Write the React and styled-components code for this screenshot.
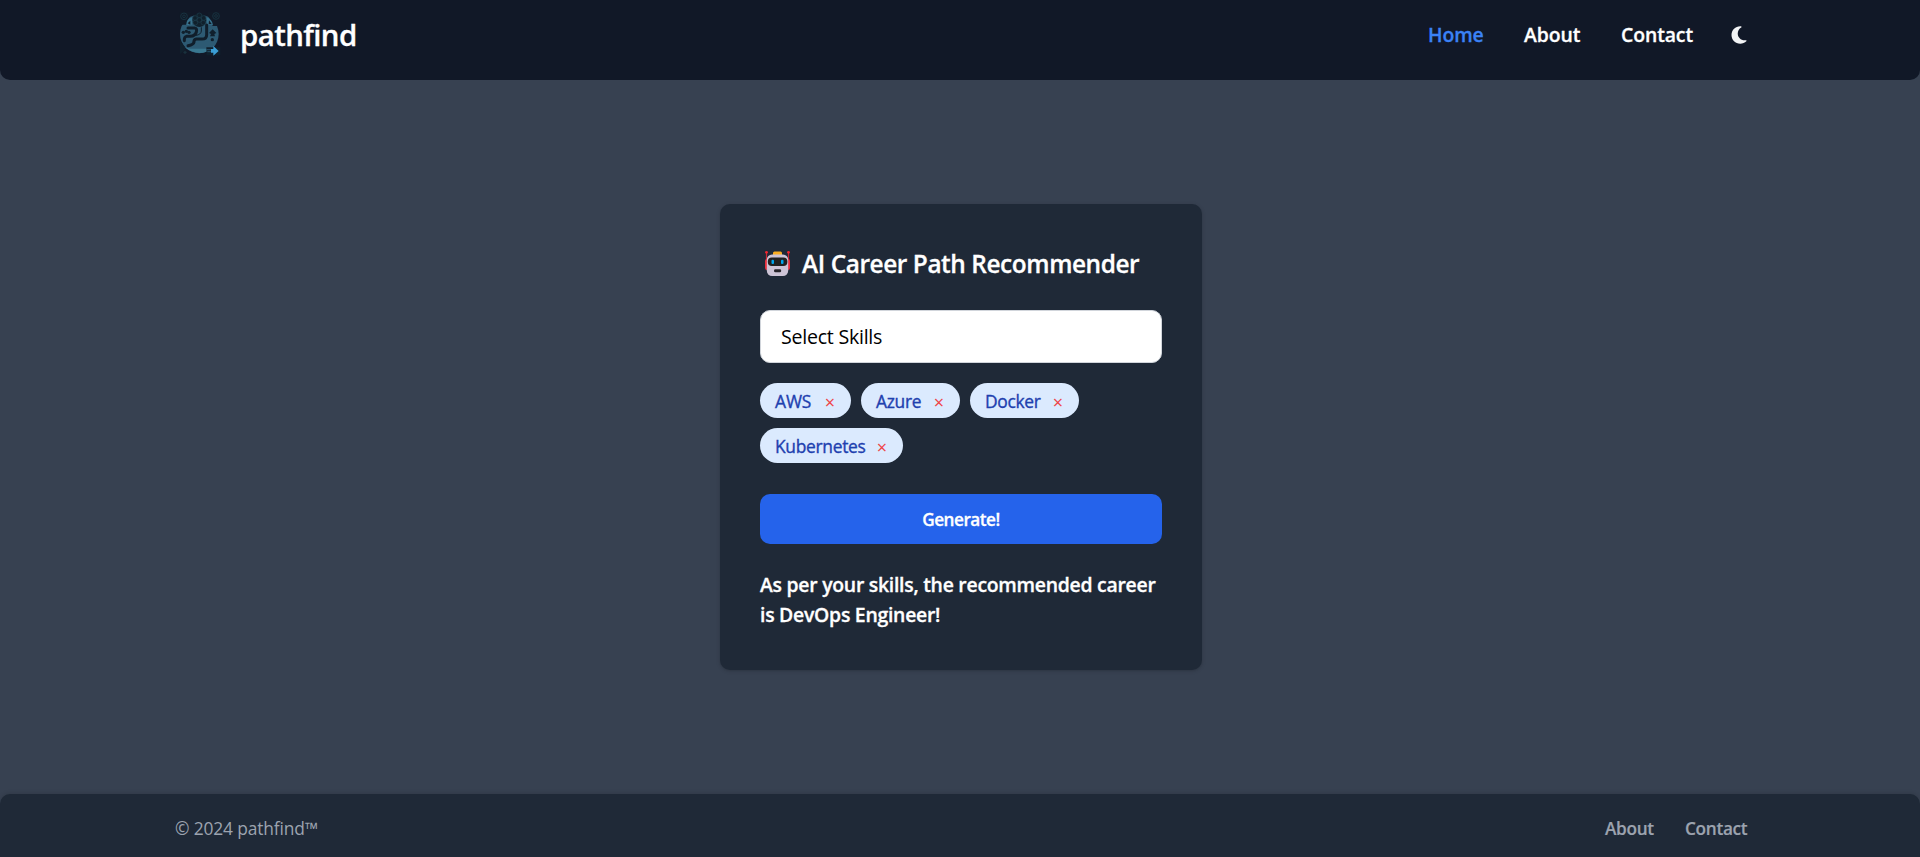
import React from "react";
import styled, { createGlobalStyle } from "styled-components";
import { FaMoon } from "react-icons/fa6";

const GlobalStyle = createGlobalStyle`
  *, *::before, *::after { box-sizing: border-box; }
  html { font-size: 20px; }
  body {
    margin: 0;
    background: #374151;
    font-family: "Open Sans", "Noto Sans", sans-serif;
    color: #fff;
    overflow: hidden;
  }
  a { color: inherit; text-decoration: none; }
  button { font: inherit; border: 0; cursor: pointer; }
`;

const Page = styled.div`
  height: 857px;
  display: flex;
  flex-direction: column;
`;

const Header = styled.header`
  height: 80px;
  flex: none;
  display: flex;
  align-items: flex-start;
  justify-content: space-between;
  padding: 5px 171px 0 175px;
  background: #111827;
  border-radius: 0 0 10px 10px;
`;

const Brand = styled.a`
  display: flex;
  align-items: center;
  height: 60px;
  gap: 15px;
`;

const LogoArt = styled.svg`
  width: 50px;
  height: 50px;
  flex: none;
`;

const BrandName = styled.span`
  font-size: 29.4px;
  font-weight: 600;
  line-height: 40px;
  letter-spacing: -0.6px;
  -webkit-text-stroke: 0.3px;
  white-space: nowrap;
`;

const Nav = styled.nav`
  display: flex;
  align-items: center;
  height: 60px;
`;

const NavLink = styled.a`
  width: ${(p) => p.$width}px;
  font-size: 19.4px;
  font-weight: 600;
  line-height: 30px;
  letter-spacing: -0.1px;
  -webkit-text-stroke: 0.3px;
  white-space: nowrap;
  color: ${(p) => (p.$active ? "#3b82f6" : "#fff")};
`;

const ThemeToggle = styled.button`
  display: flex;
  padding: 0;
  background: none;
  color: #f3f4f6;
`;

const Main = styled.main`
  flex: 1;
  display: flex;
  justify-content: center;
  align-items: flex-start;
  padding: 124px 0 0 2px;
`;

const Card = styled.section`
  width: 482px;
  height: 466px;
  padding: 40px;
  background: #1f2937;
  border-radius: 10px;
  box-shadow: 0 1px 4px rgba(0, 0, 0, 0.15), 0 1px 2px rgba(0, 0, 0, 0.06);
`;

const CardTitle = styled.h1`
  display: flex;
  align-items: center;
  height: 40px;
  margin: 0 0 26px;
  padding: 0 0 1px 4px;
  font-size: 24.4px;
  font-weight: 600;
  letter-spacing: -0.42px;
  -webkit-text-stroke: 0.3px;
  white-space: nowrap;
`;

const RobotArt = styled.svg`
  width: 27px;
  height: 27px;
  margin-right: 11px;
  flex: none;
`;

const SkillSelect = styled.div`
  display: flex;
  align-items: center;
  height: 53px;
  padding: 0 20px;
  border: 1px solid #d1d5db;
  border-radius: 10px;
  background: #fff;
  color: #000;
  font-size: 19.6px;
  letter-spacing: -0.25px;
`;

const ChipList = styled.div`
  display: flex;
  flex-wrap: wrap;
  gap: 10px;
  margin: 20px 0 31px;
`;

const Chip = styled.span`
  display: flex;
  align-items: center;
  justify-content: space-between;
  width: ${(p) => p.$width}px;
  height: 35px;
  padding: 0 16px 0 15px;
  border-radius: 18px;
  background: #dbeafe;
  color: #1e40af;
  font-size: 17.4px;
  font-weight: 500;
  letter-spacing: ${(p) => p.$track || 0}px;
  -webkit-text-stroke: 0.35px;
  white-space: nowrap;
`;

const RemoveButton = styled.button`
  display: flex;
  padding: 2px 0 0;
  background: none;
  color: #ef4444;
  font-size: 18px;
  line-height: 24px;
  letter-spacing: 0;
  -webkit-text-stroke: 0;
`;

const GenerateButton = styled.button`
  display: flex;
  align-items: center;
  justify-content: center;
  width: 100%;
  height: 50px;
  border-radius: 10px;
  background: #2563eb;
  color: #fff;
  && {
    font-size: 17.2px;
    font-weight: 600;
    letter-spacing: -0.5px;
    -webkit-text-stroke: 0.3px;
  }
`;

const Result = styled.p`
  margin: 26px -10px 0 0;
  font-size: 19.4px;
  font-weight: 600;
  line-height: 30px;
  letter-spacing: -0.26px;
  -webkit-text-stroke: 0.3px;
  white-space: nowrap;
`;

const Footer = styled.footer`
  height: 63px;
  flex: none;
  display: flex;
  align-items: center;
  justify-content: space-between;
  padding: 6px 172px 0 175px;
  background: #1f2937;
  border-radius: 10px 10px 0 0;
  box-shadow: 0 -1px 4px rgba(0, 0, 0, 0.12);
  color: #9ca3af;
  font-size: 17.2px;
  line-height: 25px;
`;

const Copyright = styled.span`
  font-size: 17.4px;
  letter-spacing: -0.15px;
  white-space: nowrap;
`;

const FooterLinks = styled.nav`
  display: flex;
  font-weight: 600;
`;

const FooterLink = styled.a`
  width: ${(p) => p.$width}px;
  letter-spacing: -0.3px;
  -webkit-text-stroke: 0.2px;
  white-space: nowrap;
`;

function Logo() {
  return (
    <LogoArt viewBox="9 12 150 150" aria-hidden="true">
      <circle cx="82" cy="84" r="58" fill="#2d5a73" />
      <path d="M22 18 H58 L43 56 H22Z M104 18 H144 V60 H122Z" fill="#111a28" />
      <path d="M43 57 Q42 39 60 34 L63 48 L58 58Z M103 34 Q120 39 123 57 L106 55Z" fill="#37718c" />
      <path d="M47 52 L55 44 V56Z M111 43 L119 54 H110Z" fill="#111c2a" />
      <g fill="none" stroke="#17313f" strokeWidth="3">
        <circle cx="36" cy="31" r="10" />
        <circle cx="132" cy="30" r="10" />
        <circle cx="36" cy="31" r="4" />
        <circle cx="132" cy="30" r="4" />
      </g>
      <circle cx="82" cy="42" r="21" fill="#10202c" />
      <g fill="none" stroke="#1d3c4c" strokeWidth="2">
        <circle cx="82" cy="42" r="7" />
        <circle cx="82" cy="28" r="7" />
        <circle cx="95" cy="36" r="7" />
        <circle cx="94" cy="50" r="7" />
        <circle cx="70" cy="50" r="7" />
        <circle cx="69" cy="36" r="7" />
      </g>
      <g fill="none" stroke="#101e2b" strokeLinecap="round" strokeLinejoin="round">
        <path d="M48 66 H68 Q76 67 73 78 Q70 90 55 91 H43 Q36 93 37 104" strokeWidth="9" />
        <path d="M104 57 V86 Q104 99 90 99 H73 Q65 100 66 108 Q65 116 48 119" strokeWidth="9" />
        <path d="M88 65 V75 Q87 86 73 88" strokeWidth="3" />
      </g>
      <g fill="#10202d">
        <circle cx="34" cy="79" r="5" />
        <circle cx="43" cy="76" r="5" />
        <circle cx="51" cy="79" r="5" />
        <path d="M122 70 L133 81 L127 84 L129 91 H114 L117 84 L111 81Z" />
        <circle cx="121" cy="101" r="5" />
        <path d="M24 102 L42 128 L24 144Z M103 124 H145 V148 H103Z" />
      </g>
      <path d="M38 124 L55 128 H103 V137 Q72 149 38 124Z" fill="#397790" />
      <path d="M104 131 H119 M106 137 H119" stroke="#27526b" strokeWidth="3" />
      <path d="M117 129 H124 V120 L140 135 L124 149 V140 H117Z" fill="#3b9ed6" />
      <path d="M39 134 V144 M34 139 H44" stroke="#19303d" strokeWidth="4" />
    </LogoArt>
  );
}

function Robot() {
  return (
    <RobotArt viewBox="0 0 27 27" aria-hidden="true">
      <path d="M2.5 2 V12 M24.5 2 V12" stroke="#c62835" strokeWidth="1.2" />
      <circle cx="2.5" cy="2.3" r="1.4" fill="#f3262e" />
      <circle cx="24.5" cy="2.3" r="1.4" fill="#f3262e" />
      <rect x="1" y="9" width="4" height="11" rx="2" fill="#e92e3c" />
      <rect x="22" y="9" width="4" height="11" rx="2" fill="#e92e3c" />
      <path d="M9 5 V3 Q9 1.5 10.5 1.5 H16.5 Q18 1.5 18 3 V5Z" fill="#fbae22" />
      <rect x="2.8" y="4.5" width="21.4" height="21.5" rx="5.2" fill="#cdc4d6" />
      <rect x="3.8" y="7.5" width="19.6" height="8.5" rx="4" fill="#212121" />
      <rect x="7.5" y="9.7" width="2.5" height="4.4" rx="1" fill="#00a6ed" />
      <rect x="17" y="9.7" width="2.5" height="4.4" rx="1" fill="#00a6ed" />
      <rect x="10" y="19.3" width="7.2" height="3" rx="1.4" fill="#262329" />
    </RobotArt>
  );
}

const skills = [
  { name: "AWS", width: 91, track: -0.1 },
  { name: "Azure", width: 99, track: -0.3 },
  { name: "Docker", width: 109, track: -0.3 },
  { name: "Kubernetes", width: 143, track: -0.3 },
];

export default function App() {
  return (
    <>
      <GlobalStyle />
      <Page>
        <Header>
          <Brand href="#">
            <Logo />
            <BrandName>pathfind</BrandName>
          </Brand>
          <Nav>
            <NavLink href="#" $active $width={96}>Home</NavLink>
            <NavLink href="#" $width={97}>About</NavLink>
            <NavLink href="#" $width={108}>Contact</NavLink>
            <ThemeToggle aria-label="Toggle theme"><FaMoon size={20} /></ThemeToggle>
          </Nav>
        </Header>
        <Main>
          <Card>
            <CardTitle><Robot />AI Career Path Recommender</CardTitle>
            <SkillSelect>Select Skills</SkillSelect>
            <ChipList>
              {skills.map((s) => (
                <Chip key={s.name} $width={s.width} $track={s.track}>
                  {s.name}
                  <RemoveButton aria-label={`Remove ${s.name}`}>×</RemoveButton>
                </Chip>
              ))}
            </ChipList>
            <GenerateButton>Generate!</GenerateButton>
            <Result>
              As per your skills, the recommended career
              <br />
              is DevOps Engineer!
            </Result>
          </Card>
        </Main>
        <Footer>
          <Copyright>© 2024 pathfind™</Copyright>
          <FooterLinks>
            <FooterLink href="#" $width={80}>About</FooterLink>
            <FooterLink href="#" $width={63}>Contact</FooterLink>
          </FooterLinks>
        </Footer>
      </Page>
    </>
  );
}
